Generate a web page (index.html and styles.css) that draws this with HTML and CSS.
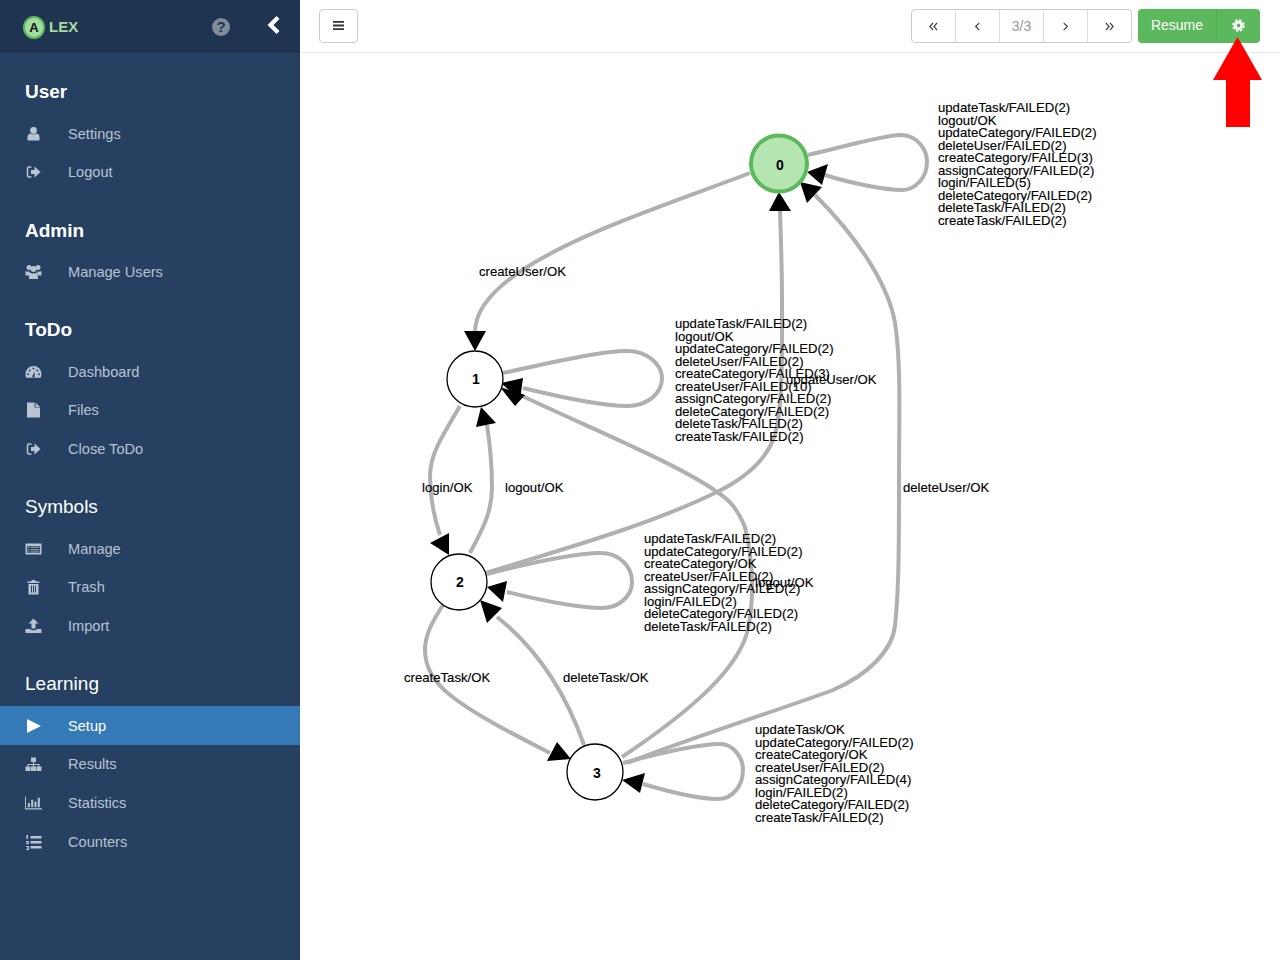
FILE: index.html
```html
<!DOCTYPE html>
<html lang="en">
<head>
    <meta charset="UTF-8" />
    <title>ALEX - Learner</title>
    <link rel="stylesheet" href="styles.css">
</head>
<body>
    <div class="sidebar">
        <div class="sidebar-top">
            <div class="logo">
                <span class="logo-circle">A</span>
                <span class="logo-text">LEX</span>
            </div>
            <span class="help">?</span>
            <svg class="collapse" width="14" height="20" viewBox="0 0 14 20"><path d="M11 2.500 3.500 10l7.500 7.500" fill="none" stroke="#fff" stroke-width="4.200"/></svg>
        </div>

        <div class="section">
            <h4 class="bold">User</h4>
            <a class="item"><svg class="icon" viewBox="0 0 16 16"><circle cx="8" cy="4.500" r="3.400"/><path d="M2 14.500V11c0-2.200 1.500-3.400 3-3.400 1.800 1.300 4.200 1.300 6 0 1.500 0 3 1.200 3 3.400v3.500z"/></svg>Settings</a>
            <a class="item"><svg class="icon" viewBox="0 0 16 16"><path d="M6 3H3.500A1.500 1.500 0 0 0 2 4.500v7A1.500 1.500 0 0 0 3.500 13H6" fill="none" stroke="currentColor" stroke-width="1.500"/><path d="M5.500 6h3.500V2.500l6 5.500-6 5.500V10H5.500z"/></svg>Logout</a>
        </div>

        <div class="section">
            <h4 class="bold">Admin</h4>
            <a class="item"><svg class="icon" viewBox="0 0 16 16"><circle cx="3.500" cy="3.500" r="2.500"/><circle cx="12.500" cy="3.500" r="2.500"/><circle cx="8" cy="5" r="3"/><path d="M0 7c1 .8 3 1 4 .3L4 11.500H0zM16 7c-1 .8-3 1-4 .3l0 4.200h4zM4.500 8.500c2 1.200 5 1.200 7 0 .8.600 1 1.500 1 2.500v4h-9v-4c0-1 .2-1.900 1-2.500z"/></svg>Manage Users</a>
        </div>

        <div class="section">
            <h4 class="bold">ToDo</h4>
            <a class="item"><svg class="icon" viewBox="0 0 16 16"><path fill-rule="evenodd" d="M8 2a8 8 0 0 1 8 8c0 1.500-.4 2.800-1 3.700H1c-.6-.9-1-2.200-1-3.700a8 8 0 0 1 8-8zM7 4.500a1 1 0 1 0 2 0 1 1 0 1 0-2 0zM3.200 6.500a1 1 0 1 0 2 0 1 1 0 1 0-2 0zM1.600 10.300a1 1 0 1 0 2 0 1 1 0 1 0-2 0zM12.400 10.300a1 1 0 1 0 2 0 1 1 0 1 0-2 0zM10.800 6.500a1 1 0 1 0 2 0 1 1 0 1 0-2 0zM6.900 12a1.200 1.200 0 1 0 2.300 0L9 7.500z"/></svg>Dashboard</a>
            <a class="item"><svg class="icon" viewBox="0 0 16 16"><path d="M1.500 0.500h7.500v5h5.500v10h-13z"/><path d="M10 0.500l4.500 4.500H10z"/></svg>Files</a>
            <a class="item"><svg class="icon" viewBox="0 0 16 16"><path d="M6 3H3.500A1.500 1.500 0 0 0 2 4.500v7A1.500 1.500 0 0 0 3.500 13H6" fill="none" stroke="currentColor" stroke-width="1.500"/><path d="M5.500 6h3.500V2.500l6 5.500-6 5.500V10H5.500z"/></svg>Close ToDo</a>
        </div>

        <div class="section">
            <h4>Symbols</h4>
            <a class="item"><svg class="icon" viewBox="0 0 16 16"><path fill-rule="evenodd" d="M0 2.500h16v11H0zM1.500 5v7h13V5z"/><path opacity=".6" d="M2 5.500h2v1.500H2zM5 5.500h9v1.500H5zM2 8h2v1.500H2zM5 8h9v1.500H5zM2 10.300h2v1.500H2zM5 10.300h9v1.500H5z"/></svg>Manage</a>
            <a class="item"><svg class="icon" viewBox="0 0 16 16"><path d="M5.500 2.500 6.500 1h3l1 1.500H14v1.500H2V2.500zM3 5h10v10.500H3z"/><path d="M5.500 6.500h1v7h-1zM7.500 6.500h1v7h-1zM9.500 6.500h1v7h-1z" fill="#254061"/></svg>Trash</a>
            <a class="item"><svg class="icon" viewBox="0 0 16 16"><path d="M8 .5l5 5h-3v5H6v-5H3zM0 11h4.500c.5 1 1.500 1.300 3.500 1.300s3-.3 3.500-1.300H16v4H0z"/></svg>Import</a>
        </div>

        <div class="section">
            <h4>Learning</h4>
            <a class="item active"><svg class="icon" viewBox="0 0 16 16"><path d="M1.500 1 15.500 8 1.500 15z"/></svg>Setup</a>
            <a class="item"><svg class="icon" viewBox="0 0 16 16"><path d="M5.500 1.500h5v4.500h-5zM7.500 6h1v2h5.500v2.500h-1V9H8.500v1.500h-1V9H3v1.500H2V8h5.500zM0 10.500h5V15H0zM5.500 10.500h5V15h-5zM11 10.500h5V15h-5z"/></svg>Results</a>
            <a class="item"><svg class="icon" viewBox="0 0 18 16"><path d="M0 1h1v12.500h17V15H0zM3 8h2.200v4.500H3zM6.500 4.500h2.200v8H6.500zM10 6.500h2.200v6H10zM13.500 2.500h2.200v10h-2.200z"/></svg>Statistics</a>
            <a class="item"><svg class="icon" viewBox="0 0 16 16"><path d="M5 2h11v2.500H5zM5 7h11v2.500H5zM5 12h11v2.500H5zM1 1h1.500v4H1zM0.500 7h3v1l-1.500 1h1.500v1H.5V9L2 8H.5zM.5 12h3v4h-3v-1h2v-.5h-1v-1h1V13h-2z"/></svg>Counters</a>
        </div>
    </div>

    <div class="main">
        <div class="topbar">
            <button class="btn toggle">
                <svg width="11" height="11" viewBox="0 0 12 12"><path d="M0 1h12v2H0zM0 5h12v2H0zM0 9h12v2H0z" fill="#333"/></svg>
            </button>
            <div class="right-tools">
                <div class="pager">
                    <span class="page"><svg width="9" height="9" viewBox="0 0 10 10"><path d="M4.500 1 1 5l3.500 4M9 1 5.500 5 9 9" class="chev"/></svg></span>
                    <span class="page"><svg width="9" height="9" viewBox="0 0 10 10"><path d="M7 1 3 5l4 4" class="chev"/></svg></span>
                    <span class="page count">3/3</span>
                    <span class="page"><svg width="9" height="9" viewBox="0 0 10 10"><path d="M3 1l4 4-4 4" class="chev"/></svg></span>
                    <span class="page"><svg width="9" height="9" viewBox="0 0 10 10"><path d="M1 1l3.500 4L1 9M5.500 1 9 5 5.500 9" class="chev"/></svg></span>
                </div>
                <div class="resume">
                    <span class="resume-label">Resume</span>
                    <span class="resume-gear">
                        <svg width="13" height="13" viewBox="0 0 13 13"><circle cx="6.500" cy="6.500" r="3.300" fill="none" stroke="#fff" stroke-width="2.800"/><circle cx="6.500" cy="6.500" r="5.500" fill="none" stroke="#fff" stroke-width="1.600" stroke-dasharray="2.600 1.720"/></svg>
                    </span>
                </div>
            </div>
        </div>

        <div class="graph">
            <svg width="980" height="907" viewBox="300 53 980 907">
                <!-- edges -->
                <g class="edges">
                    <path d="M750,173 C640,215 475,265 475,332"/>
                    <path d="M808,155 C850,145 885,135 900,135 C918,135 927,150 927,162 C927,178 915,190 902,190 C885,190 850,183 825,175"/>
                    <path d="M503,373 C550,363 600,351 627,351 C648,351 662,365 662,378 C662,393 648,406 627,406 C600,406 560,397 523,388"/>
                    <path d="M460,406 C440,440 430,455 430,477 C430,500 435,520 440,535"/>
                    <path d="M470,553 C485,525 492,510 492,487 C492,465 490,445 487,425"/>
                    <path d="M487,574 C530,563 575,553 600,553 C620,553 632,567 632,582 C632,597 618,608 602,608 C580,608 540,600 507,592"/>
                    <path d="M443,605 C432,622 425,635 425,650 C425,668 435,683 450,695 C475,715 515,735 550,753"/>
                    <path d="M584,745 C570,705 545,655 497,617"/>
                    <path d="M623,763 C660,753 700,744 720,744 C733,744 743,757 743,770 C743,785 733,799 718,799 C700,799 670,792 643,784"/>
                    <path d="M622,757 C680,718 735,675 747,633 C755,600 753,560 745,527 C738,510 730,500 717,492 C680,465 590,428 520,395"/>
                    <path d="M486,573 C560,550 650,525 717,492 C745,478 765,460 773,440 C783,415 782,360 782,300 C782,270 781,240 780,210"/>
                    <path d="M627,763 C690,738 785,708 833,690 C868,675 893,650 895,625 C899,590 899,540 899,480 C899,420 901,370 896,330 C892,290 860,240 815,195"/>
                </g>
                <!-- arrow heads -->
                <g class="heads">
                    <path d="M475,351 464,331 486,331z"/>
                    <path d="M807,172 828,164 822,185z"/>
                    <path d="M800,182 822,187 807,203z"/>
                    <path d="M779,192 769,211 791,211z"/>
                    <path d="M501,383 523,378 520,400z"/>
                    <path d="M500,387 525,395 515,406z"/>
                    <path d="M449,555 430,543 449,533z"/>
                    <path d="M481,407 476,427 496,423z"/>
                    <path d="M487,587 507,581 503,602z"/>
                    <path d="M571,759 547,761 557,742z"/>
                    <path d="M480,600 487,623 502,608z"/>
                    <path d="M622,780 645,773 640,793z"/>
                </g>
                <!-- nodes -->
                <circle class="node start" cx="779" cy="163.500" r="28"/>
                <circle class="node" cx="475" cy="379" r="28"/>
                <circle class="node" cx="459" cy="582" r="28"/>
                <circle class="node" cx="595" cy="772" r="28"/>
                <text class="node-label" x="780" y="170">0</text>
                <text class="node-label" x="476" y="384">1</text>
                <text class="node-label" x="460" y="587">2</text>
                <text class="node-label" x="597" y="778">3</text>
                <!-- edge labels -->
                <text class="edge-label" y="112">
                    <tspan x="938">updateTask/FAILED(2)</tspan>
                    <tspan x="938" dy="12.550">logout/OK</tspan>
                    <tspan x="938" dy="12.550">updateCategory/FAILED(2)</tspan>
                    <tspan x="938" dy="12.550">deleteUser/FAILED(2)</tspan>
                    <tspan x="938" dy="12.550">createCategory/FAILED(3)</tspan>
                    <tspan x="938" dy="12.550">assignCategory/FAILED(2)</tspan>
                    <tspan x="938" dy="12.550">login/FAILED(5)</tspan>
                    <tspan x="938" dy="12.550">deleteCategory/FAILED(2)</tspan>
                    <tspan x="938" dy="12.550">deleteTask/FAILED(2)</tspan>
                    <tspan x="938" dy="12.550">createTask/FAILED(2)</tspan>
                </text>
                <text class="edge-label" y="328">
                    <tspan x="675">updateTask/FAILED(2)</tspan>
                    <tspan x="675" dy="12.550">logout/OK</tspan>
                    <tspan x="675" dy="12.550">updateCategory/FAILED(2)</tspan>
                    <tspan x="675" dy="12.550">deleteUser/FAILED(2)</tspan>
                    <tspan x="675" dy="12.550">createCategory/FAILED(3)</tspan>
                    <tspan x="675" dy="12.550">createUser/FAILED(10)</tspan>
                    <tspan x="675" dy="12.550">assignCategory/FAILED(2)</tspan>
                    <tspan x="675" dy="12.550">deleteCategory/FAILED(2)</tspan>
                    <tspan x="675" dy="12.550">deleteTask/FAILED(2)</tspan>
                    <tspan x="675" dy="12.550">createTask/FAILED(2)</tspan>
                </text>
                <text class="edge-label" y="543">
                    <tspan x="644">updateTask/FAILED(2)</tspan>
                    <tspan x="644" dy="12.550">updateCategory/FAILED(2)</tspan>
                    <tspan x="644" dy="12.550">createCategory/OK</tspan>
                    <tspan x="644" dy="12.550">createUser/FAILED(2)</tspan>
                    <tspan x="644" dy="12.550">assignCategory/FAILED(2)</tspan>
                    <tspan x="644" dy="12.550">login/FAILED(2)</tspan>
                    <tspan x="644" dy="12.550">deleteCategory/FAILED(2)</tspan>
                    <tspan x="644" dy="12.550">deleteTask/FAILED(2)</tspan>
                </text>
                <text class="edge-label" y="734">
                    <tspan x="755">updateTask/OK</tspan>
                    <tspan x="755" dy="12.550">updateCategory/FAILED(2)</tspan>
                    <tspan x="755" dy="12.550">createCategory/OK</tspan>
                    <tspan x="755" dy="12.550">createUser/FAILED(2)</tspan>
                    <tspan x="755" dy="12.550">assignCategory/FAILED(4)</tspan>
                    <tspan x="755" dy="12.550">login/FAILED(2)</tspan>
                    <tspan x="755" dy="12.550">deleteCategory/FAILED(2)</tspan>
                    <tspan x="755" dy="12.550">createTask/FAILED(2)</tspan>
                </text>
                <text class="edge-label" x="479" y="276">createUser/OK</text>
                <text class="edge-label" x="786" y="384">updateUser/OK</text>
                <text class="edge-label" x="903" y="492">deleteUser/OK</text>
                <text class="edge-label" x="422" y="492">login/OK</text>
                <text class="edge-label" x="505" y="492">logout/OK</text>
                <text class="edge-label" x="755" y="587">logout/OK</text>
                <text class="edge-label" x="404" y="682">createTask/OK</text>
                <text class="edge-label" x="563" y="682">deleteTask/OK</text>
            </svg>
        </div>
    </div>

    <svg class="red-arrow" width="50" height="91" viewBox="0 0 50 91"><path d="M24.500 0 49 43H37V90H13V43H0z" fill="#f00"/></svg>
</body>
</html>
```

FILE: styles.css
```css
* {
    box-sizing: border-box;
}
body {
    font-family: "Liberation Sans", Arial, sans-serif;
    margin: 0;
    display: flex;
    height: 960px;
    overflow: hidden;
    background: #fff;
}
.sidebar {
    width: 300px;
    flex-shrink: 0;
    background: #254061;
    color: #b8c4d2;
}
.sidebar-top {
    height: 53px;
    background: #1f3450;
    display: flex;
    align-items: center;
    padding-left: 23px;
    margin-bottom: 28.300px;
}
.logo {
    display: flex;
    align-items: center;
    width: 189px;
}
.logo-circle {
    width: 22px;
    height: 23px;
    border-radius: 50%;
    background: #a3dc9f;
    border: 2px solid #5cb85c;
    color: #111;
    font-size: 13px;
    font-weight: bold;
    line-height: 19px;
    text-align: center;
    margin-top: 1px;
}
.logo-text {
    color: #a3dc9f;
    font-size: 15px;
    font-weight: bold;
    margin-left: 4px;
}
.help {
    width: 18px;
    height: 18px;
    border-radius: 50%;
    background: #808c9c;
    color: #1f3450;
    font-size: 15px;
    font-weight: bold;
    line-height: 18px;
    text-align: center;
}
.collapse {
    margin-left: 37px;
    margin-top: -3px;
}
.section {
    margin-bottom: 28px;
}
h4 {
    margin: 0 0 12px 25px;
    color: #fff;
    font-size: 19px;
    font-weight: normal;
    line-height: 21px;
}
h4.bold {
    font-weight: bold;
}
.item {
    display: flex;
    align-items: center;
    height: 38.670px;
    padding-left: 25px;
    font-size: 14.600px;
}
.item.active {
    background: #337ab7;
    color: #fff;
}
.icon {
    width: 17px;
    height: 16px;
    margin-right: 26px;
    fill: currentColor;
}
.main {
    flex: 1;
    min-width: 0;
}
.topbar {
    height: 53px;
    border-bottom: 1px solid #e7e7e7;
    display: flex;
    justify-content: space-between;
    align-items: flex-start;
    padding: 9px 20px 0 19px;
}
.btn {
    background: #fff;
    border: 1px solid #ccc;
    border-radius: 4px;
    padding: 0 1px 0 0;
}
.toggle {
    width: 39px;
    height: 34px;
}
.right-tools {
    display: flex;
    gap: 6px;
}
.pager {
    display: flex;
    width: 221px;
    height: 34px;
    border: 1px solid #ccc;
    border-radius: 4px;
}
.page {
    width: 44px;
    display: flex;
    align-items: center;
    justify-content: center;
    border-left: 1px solid #ddd;
}
.page:first-child {
    border-left: none;
    width: 43px;
}
.count {
    color: #999;
    font-size: 14px;
    width: 45px;
}
.chev {
    fill: none;
    stroke: #444;
    stroke-width: 1.400;
}
.resume {
    display: flex;
    width: 122px;
    height: 34px;
    background: #5cb85c;
    border-radius: 4px;
    color: #fff;
    font-size: 14px;
}
.resume-label {
    width: 79px;
    text-align: center;
    line-height: 32px;
    border-right: 1px solid #4cae4c;
}
.resume-gear {
    flex: 1;
    display: flex;
    align-items: center;
    justify-content: center;
    padding-bottom: 2px;
}
.graph svg {
    display: block;
}
.edges path {
    fill: none;
    stroke: #b0b0b0;
    stroke-width: 4;
}
.heads path {
    fill: #000;
}
.node {
    fill: #fff;
    stroke: #000;
    stroke-width: 1.300;
}
.node.start {
    fill: #b5e5b0;
    stroke: #5cb85c;
    stroke-width: 4;
}
.node-label {
    font-size: 14px;
    font-weight: bold;
    text-anchor: middle;
    fill: #000;
}
.edge-label {
    font-size: 13.150px;
    fill: #000;
    stroke: #000;
    stroke-width: 0.150px;
}
.red-arrow {
    position: absolute;
    left: 1213px;
    top: 37px;
}
```
